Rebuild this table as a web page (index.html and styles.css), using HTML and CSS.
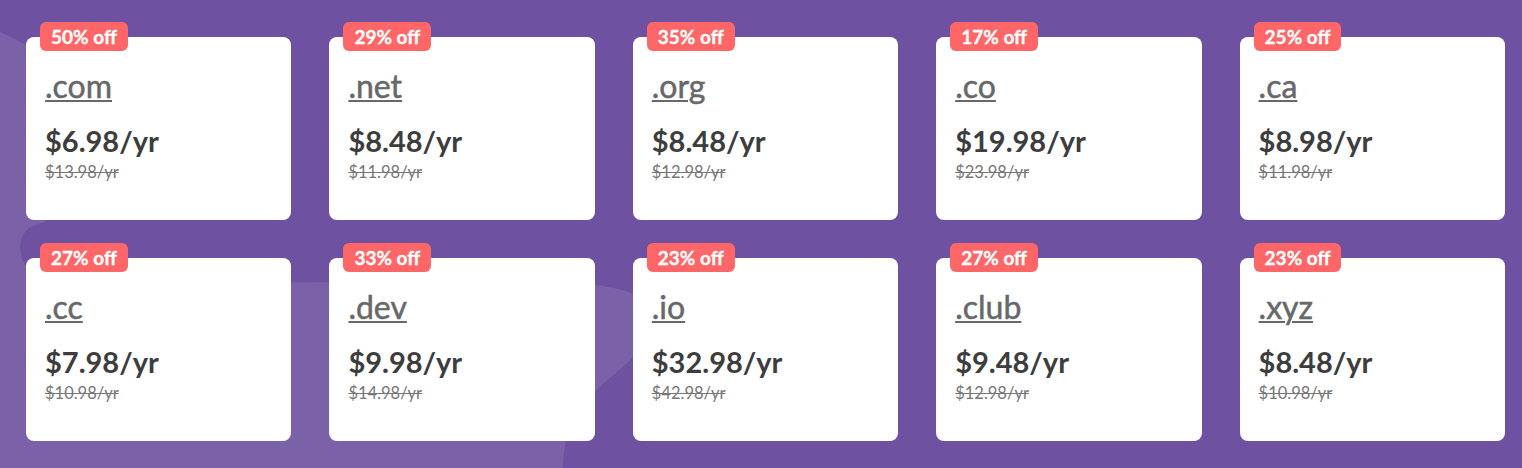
FILE: index.html
```html
<!DOCTYPE html>
<html lang="en">
<head>
<meta charset="utf-8">
<title>Domain deals</title>
<link rel="stylesheet" href="styles.css">
</head>
<body>
<section class="deals">
  <svg class="blob" width="1522" height="468" viewBox="0 0 1522 468" aria-hidden="true">
    <path d="M0,32 Q20,40 45,58 L45,222 Q20,226 20,248 Q22,280 62,281 L588,284 Q650,290 665,320 Q650,345 605,382 Q562,418 563,468 L0,468 Z" fill="#7b62a8"/>
  </svg>
  <div class="grid">
    <div class="card"><span class="badge">50% off</span><a class="tld" href="#">.com</a><div class="price">$6.98/yr</div><div class="old">$13.98/yr</div></div>
    <div class="card"><span class="badge">29% off</span><a class="tld" href="#">.net</a><div class="price">$8.48/yr</div><div class="old">$11.98/yr</div></div>
    <div class="card"><span class="badge">35% off</span><a class="tld" href="#">.org</a><div class="price">$8.48/yr</div><div class="old">$12.98/yr</div></div>
    <div class="card"><span class="badge">17% off</span><a class="tld" href="#">.co</a><div class="price">$19.98/yr</div><div class="old">$23.98/yr</div></div>
    <div class="card"><span class="badge">25% off</span><a class="tld" href="#">.ca</a><div class="price">$8.98/yr</div><div class="old">$11.98/yr</div></div>
    <div class="card"><span class="badge">27% off</span><a class="tld" href="#">.cc</a><div class="price">$7.98/yr</div><div class="old">$10.98/yr</div></div>
    <div class="card"><span class="badge">33% off</span><a class="tld" href="#">.dev</a><div class="price">$9.98/yr</div><div class="old">$14.98/yr</div></div>
    <div class="card"><span class="badge">23% off</span><a class="tld" href="#">.io</a><div class="price">$32.98/yr</div><div class="old">$42.98/yr</div></div>
    <div class="card"><span class="badge">27% off</span><a class="tld" href="#">.club</a><div class="price">$9.48/yr</div><div class="old">$12.98/yr</div></div>
    <div class="card"><span class="badge">23% off</span><a class="tld" href="#">.xyz</a><div class="price">$8.48/yr</div><div class="old">$10.98/yr</div></div>
  </div>
</section>
</body>
</html>
```

FILE: styles.css
```css
html, body {
  margin: 0;
  padding: 0;
}
body {
  background: #6e52a1;
  font-family: Lato, "Liberation Sans", sans-serif;
  width: 1522px;
  height: 468px;
  overflow: hidden;
}
.deals {
  position: relative;
  height: 468px;
}
.blob {
  position: absolute;
  left: 0;
  top: 0;
}
.grid {
  position: relative;
  display: grid;
  grid-template-columns: repeat(5, 1fr);
  column-gap: 38px;
  row-gap: 38px;
  padding: 37px 17px 0 26px;
}
.card {
  position: relative;
  background: #fff;
  border-radius: 8px;
  height: 183px;
  box-sizing: border-box;
  padding: 32px 19px 0 19px;
  display: flex;
  flex-direction: column;
  align-items: flex-start;
}
.badge {
  position: absolute;
  left: 14px;
  top: -15px;
  height: 29px;
  line-height: 29px;
  padding: 0 11px;
  border-radius: 6px;
  background: #fe6667;
  color: #fff;
  font-weight: 700;
  font-size: 19px;
  -webkit-text-stroke: 0.3px #fff;
}
.tld {
  font-size: 32px;
  line-height: 34px;
  color: #666869;
  -webkit-text-stroke: 0.5px #666869;
  text-decoration: underline;
  text-decoration-thickness: 2px;
  text-underline-offset: 2px;
}
.price {
  margin-top: 21px;
  font-size: 29px;
  line-height: 34px;
  font-weight: 700;
  color: #3d3d3d;
}
.old {
  margin-top: 4px;
  font-size: 16.5px;
  line-height: 20px;
  color: #777;
  text-decoration: line-through;
}
```
